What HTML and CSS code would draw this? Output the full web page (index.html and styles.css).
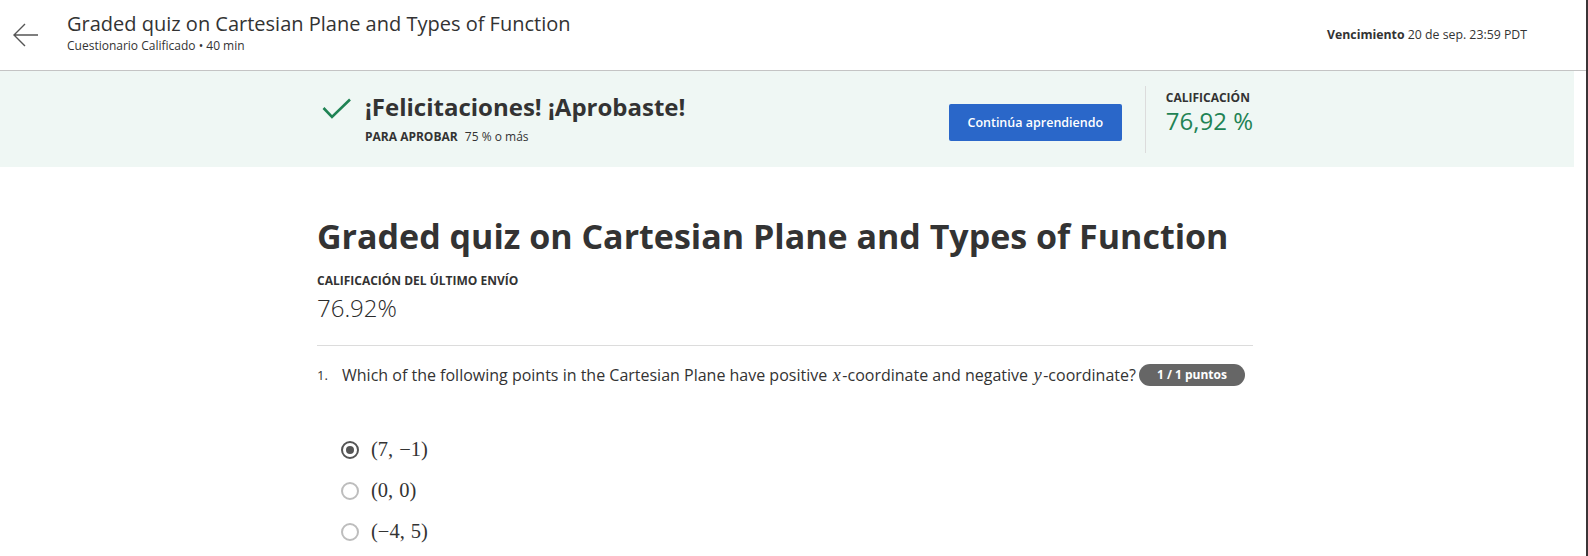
FILE: index.html
```html
<!DOCTYPE html>
<html lang="es">
<head>
<meta charset="utf-8">
<title>Graded quiz</title>
<link rel="stylesheet" href="styles.css">
</head>
<body>
<div class="frame">
  <div class="app">
    <header class="topbar">
      <svg class="back" width="28" height="28" viewBox="0 0 28 28" aria-hidden="true">
        <path d="M26 14 H2 M13 3 L2 14 L13 25" fill="none" stroke="#555" stroke-width="1.4"/>
      </svg>
      <div class="topbar-titles">
        <div class="topbar-title">Graded quiz on Cartesian Plane and Types of Function</div>
        <div class="topbar-sub">Cuestionario Calificado • 40 min</div>
      </div>
      <div class="due"><b>Vencimiento</b> 20 de sep. 23:59 PDT</div>
    </header>

    <section class="banner">
      <div class="banner-inner">
        <svg class="check" width="30" height="22" viewBox="0 0 30 22" aria-hidden="true">
          <path d="M1.5 10 L10 19 L28 1.5" fill="none" stroke="#1f8354" stroke-width="2.6"/>
        </svg>
        <div class="banner-text">
          <div class="congrats">¡Felicitaciones! ¡Aprobaste!</div>
          <div class="pass"><b>PARA APROBAR</b> 75 % o más</div>
        </div>
        <button class="cta">Continúa aprendiendo</button>
        <div class="vsep"></div>
        <div class="grade">
          <div class="grade-label">CALIFICACIÓN</div>
          <div class="grade-value">76,92 %</div>
        </div>
      </div>
    </section>

    <div class="content-wrap">
      <main class="content">
        <h1 class="quiz-title">Graded quiz on Cartesian Plane and Types of Function</h1>
        <div class="last-label">CALIFICACIÓN DEL ÚLTIMO ENVÍO</div>
        <div class="last-value">76.92%</div>
        <hr class="rule">
        <div class="question">
          <span class="qnum">1.</span>
          <span class="qtext">Which of the following points in the Cartesian Plane have positive <i class="m">x</i>-coordinate and negative <i class="m">y</i>-coordinate?</span>
          <span class="badge">1 / 1 puntos</span>
        </div>
        <ul class="options">
          <li class="opt"><span class="radio checked"></span><span class="math">(7,<span class="sp"></span>−1)</span></li>
          <li class="opt"><span class="radio"></span><span class="math">(0,<span class="sp"></span>0)</span></li>
          <li class="opt"><span class="radio"></span><span class="math">(−4,<span class="sp"></span>5)</span></li>
        </ul>
      </main>
    </div>
  </div>
  <div class="edge"></div>
</div>
</body>
</html>
```
FILE: styles.css
```css
* { box-sizing: border-box; }
html, body { margin: 0; padding: 0; }
body {
  font-family: "Open Sans", "Liberation Sans", sans-serif;
  color: #333;
  background: #fff;
  width: 1588px;
  height: 556px;
  overflow: hidden;
}
.frame { display: flex; height: 556px; }
.app { width: 1586px; }
.edge { width: 2px; background: #3b3437; }

.topbar {
  height: 71px;
  border-bottom: 1px solid #c4c4c4;
  display: flex;
  align-items: center;
  padding: 0 59px 0 12px;
}
.back { display: block; }
.topbar-titles { margin-left: 27px; margin-top: -4px; }
.topbar-title { font-size: 20px; line-height: 26px; color: #333; }
.topbar-sub { font-size: 12px; line-height: 18px; color: #333; }
.due { margin-left: auto; font-size: 12.3px; color: #333; margin-top: -1px; }
.due b { font-weight: 700; }

.banner { width: 1574px; height: 96px; background: #eff7f4; padding-right: 4px; }
.banner-inner {
  width: 936px;
  margin: 0 auto;
  height: 96px;
  display: flex;
  align-items: center;
}
.check { margin-left: 5px; margin-top: -20px; flex-shrink: 0; }
.banner-text { margin-left: 13px; margin-top: -2px; }
.congrats { font-size: 24px; font-weight: 700; line-height: 30px; color: #333; }
.pass { font-size: 12px; line-height: 16px; margin-top: 7px; color: #333; }
.pass b { font-weight: 700; margin-right: 4px; }
.cta {
  margin-left: auto;
  width: 173px;
  height: 37px;
  border: 0;
  border-radius: 2px;
  background: #2a67c9;
  color: #fff;
  font-family: inherit;
  font-size: 12.5px;
  font-weight: 600;
  margin-top: 6px;
  flex-shrink: 0;
}
.vsep { width: 1px; height: 67px; background: #dcdcdc; margin-left: 23px; margin-right: 20px; flex-shrink: 0; }
.grade { white-space: nowrap; margin-top: -12px; }
.grade-label { font-size: 12px; font-weight: 700; line-height: 16px; color: #333; }
.grade-value { font-size: 24px; line-height: 30px; color: #1f8354; }

.content-wrap { padding-right: 16px; }
.content { width: 936px; margin: 0 auto; }
.quiz-title { margin: 45px 0 0; font-size: 34px; font-weight: 700; line-height: 48px; color: #333; white-space: nowrap; }
.last-label { margin-top: 14px; font-size: 12px; font-weight: 700; line-height: 14px; }
.last-value { font-size: 24px; line-height: 30px; margin-top: 5px; font-weight: 300; color: #2b2b2b; }
.rule { border: 0; border-top: 1px solid #dcdcdc; margin: 22px 0 0; }
.question { display: flex; align-items: center; margin-top: 17px; font-size: 16px; line-height: 24px; }
.qnum { font-size: 13px; width: 25px; flex-shrink: 0; }
.qtext { color: #333; white-space: nowrap; }
.m { font-family: "Liberation Serif", serif; font-style: italic; font-size: 18px; padding: 0 1.5px; }
.badge {
  margin-left: 3px;
  background: #666;
  color: #fff;
  font-size: 12px;
  font-weight: 700;
  border-radius: 11px;
  height: 22px;
  line-height: 22px;
  padding: 0 18px;
  white-space: nowrap;
}
.options { list-style: none; margin: 42px 0 0; padding: 0 0 0 24px; }
.opt { display: flex; align-items: center; height: 41px; }
.radio {
  width: 18px; height: 18px; border-radius: 50%;
  border: 2px solid #bdbdbd;
  display: inline-flex; align-items: center; justify-content: center;
  flex-shrink: 0;
}
.radio.checked { border-color: #555; }
.radio.checked::after { content: ""; width: 8px; height: 8px; border-radius: 50%; background: #555; }
.math { margin-left: 12px; font-family: "Liberation Serif", serif; font-size: 20.5px; color: #333; display: inline-flex; align-items: baseline; }
.sp { display: inline-block; width: 6px; }
```
